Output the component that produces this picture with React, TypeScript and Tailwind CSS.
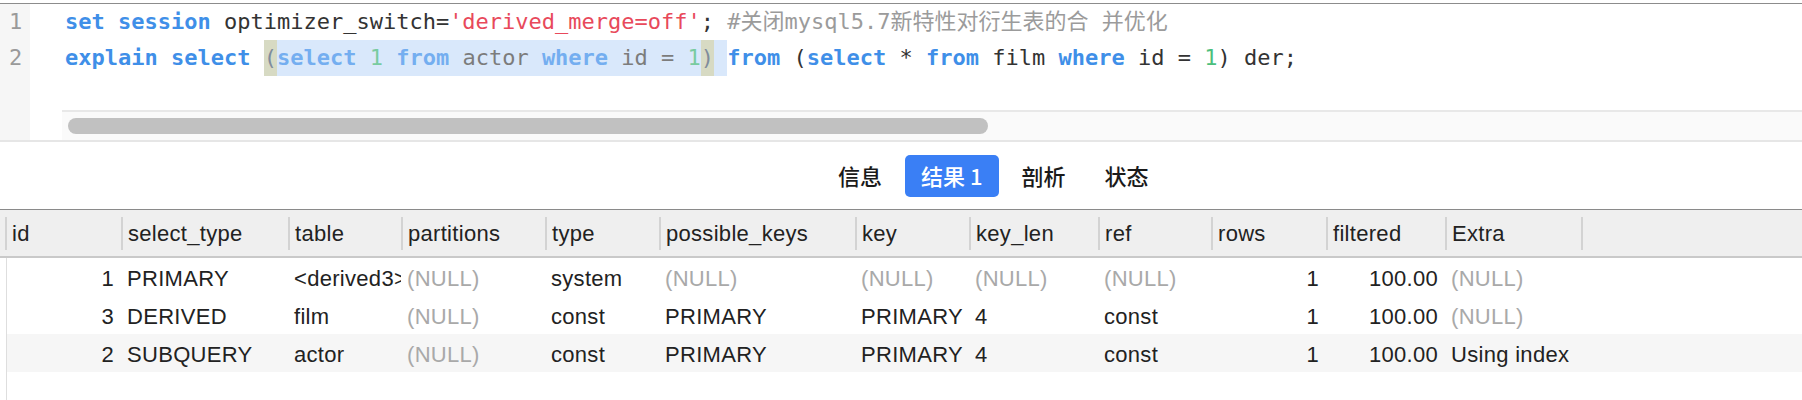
import React from 'react';

const MONO = { fontFamily: '"DejaVu Sans Mono", "Noto Sans CJK SC", monospace' };

type Tok = { t: string; c: string };

const KW = 'text-[#3f8fe8] font-bold';
const KW_SEL = 'text-[#74aef0] font-bold';
const TXT = 'text-[#333333]';
const TXT_SEL = 'text-[#7c7c7c]';
const NUM = 'text-[#4cbf7c]';
const NUM_SEL = 'text-[#78cba0]';

const line1: Tok[] = [
  { t: 'set session ', c: KW },
  { t: 'optimizer_switch=', c: TXT },
  { t: "'derived_merge=off'", c: 'text-[#e8495b]' },
  { t: ';', c: TXT },
  { t: ' #关闭mysql5.7新特性对衍生表的合 并优化', c: 'text-[#9b9b9b]' },
];

// selection inside line 2 (bracket match + selected text)
const line2Sel: Tok[] = [
  { t: '(', c: 'text-[#7f8c9c] bg-[#d7dac3]' },
  { t: 'select', c: KW_SEL + ' bg-[#d9e8fb]' },
  { t: ' ', c: 'bg-[#d9e8fb]' },
  { t: '1', c: NUM_SEL + ' bg-[#d9e8fb]' },
  { t: ' ', c: 'bg-[#d9e8fb]' },
  { t: 'from', c: KW_SEL + ' bg-[#d9e8fb]' },
  { t: ' actor ', c: TXT_SEL + ' bg-[#d9e8fb]' },
  { t: 'where', c: KW_SEL + ' bg-[#d9e8fb]' },
  { t: ' id = ', c: TXT_SEL + ' bg-[#d9e8fb]' },
  { t: '1', c: NUM_SEL + ' bg-[#d9e8fb]' },
  { t: ')', c: 'text-[#7f8c9c] bg-[#d7dac3]' },
  { t: ' ', c: 'bg-[#d9e8fb]' },
];

const line2Rest: Tok[] = [
  { t: 'from', c: KW },
  { t: ' (', c: TXT },
  { t: 'select', c: KW },
  { t: ' * ', c: TXT },
  { t: 'from', c: KW },
  { t: ' film ', c: TXT },
  { t: 'where', c: KW },
  { t: ' id = ', c: TXT },
  { t: '1', c: NUM },
  { t: ') der;', c: TXT },
];

const COLS = [
  { name: 'id', w: 116, align: 'right' },
  { name: 'select_type', w: 167 },
  { name: 'table', w: 113 },
  { name: 'partitions', w: 144 },
  { name: 'type', w: 114 },
  { name: 'possible_keys', w: 196 },
  { name: 'key', w: 114 },
  { name: 'key_len', w: 129 },
  { name: 'ref', w: 113 },
  { name: 'rows', w: 115, align: 'right' },
  { name: 'filtered', w: 119, align: 'right' },
  { name: 'Extra', w: 136 },
];

const ROWS = [
  ['1', 'PRIMARY', '<derived3>', '(NULL)', 'system', '(NULL)', '(NULL)', '(NULL)', '(NULL)', '1', '100.00', '(NULL)'],
  ['3', 'DERIVED', 'film', '(NULL)', 'const', 'PRIMARY', 'PRIMARY', '4', 'const', '1', '100.00', '(NULL)'],
  ['2', 'SUBQUERY', 'actor', '(NULL)', 'const', 'PRIMARY', 'PRIMARY', '4', 'const', '1', '100.00', 'Using index'],
];

function Toks({ toks, block }: { toks: Tok[]; block?: boolean }) {
  return (
    <>
      {toks.map((k, i) => (
        <span key={i} className={`${k.c} ${block ? 'inline-block h-[36px]' : ''}`}>
          {k.t}
        </span>
      ))}
    </>
  );
}

function Editor() {
  return (
    <div className="flex border-b-2 border-[#e6e6e6]" style={MONO}>
      <div className="w-[30px] shrink-0 bg-[#f6f6f6] text-[22px] leading-[36px] text-[#9a9a9a]">
        <div className="pl-[9px]">1</div>
        <div className="pl-[9px]">2</div>
      </div>
      <div className="flex-1 min-w-0">
        <div className="pl-[35px] text-[22px] leading-[36px] whitespace-pre">
          <div className="h-[36px]">
            <Toks toks={line1} />
          </div>
          <div className="h-[36px] flex">
            <span className="inline-block h-[36px] text-[#3f8fe8] font-bold">explain select </span>
            <Toks toks={line2Sel} block />
            <span className="inline-block h-[36px]">
              <Toks toks={line2Rest} />
            </span>
          </div>
        </div>
        <div className="h-[34px]" />
        <div className="ml-[32px] h-[30px] border-t-2 border-[#e8e8e8] bg-[#fafafa] pt-[6px] pl-[6px]">
          <div className="w-[920px] h-[16px] rounded-full bg-[#c1c1c1]" />
        </div>
      </div>
    </div>
  );
}

function Tabs() {
  const tabs = ['信息', '结果 1', '剖析', '状态'];
  return (
    <div
      className="h-[67px] flex items-center pl-[822px] gap-[7px] text-[22px] font-medium text-[#1a1a1a]"
      style={{ fontFamily: '"Noto Sans CJK SC", "Liberation Sans", sans-serif' }}
    >
      {tabs.map((t, i) => (
        <div
          key={t}
          className={`h-[42px] px-4 flex items-center rounded-[5px] ${i === 1 ? 'bg-[#3a7ff5] text-white' : ''}`}
        >
          {t}
        </div>
      ))}
    </div>
  );
}

function ResultGrid() {
  return (
    <div
      className="text-[22px] tracking-[0.3px] text-[#222222]"
      style={{ fontFamily: '"Liberation Sans", Arial, sans-serif' }}
    >
      <div className="h-[49px] flex items-center pl-[5px] bg-[#efefef] border-t border-[#8a8a8a] border-b-2 border-b-[#c9c9c9]">
        {COLS.map(c => (
          <div key={c.name} className="flex items-center shrink-0" style={{ width: c.w }}>
            <div className="w-[2px] h-[33px] bg-[#d3d3d3]" />
            <div className="pl-[5px] whitespace-nowrap">{c.name}</div>
          </div>
        ))}
        <div className="w-[2px] h-[33px] bg-[#d3d3d3]" />
      </div>
      <div className="flex h-[142px]">
        <div className="w-[6px] shrink-0" />
        <div className="w-px shrink-0 bg-[#dedede]" />
        <div className="flex-1">
          {ROWS.map((r, ri) => (
            <div key={ri} className={`h-[38px] flex items-center ${ri === 2 ? 'bg-[#f6f6f6]' : ''}`}>
              {r.map((v, ci) => {
                const col = COLS[ci];
                const w = ci === 0 ? col.w - 2 : col.w;
                const right = col.align === 'right';
                return (
                  <div
                    key={ci}
                    className={`shrink-0 overflow-hidden whitespace-nowrap pt-[3px] ${right ? 'text-right pr-[7px]' : 'pl-[6px]'} ${v === '(NULL)' ? 'text-[#a9a9a9]' : ''}`}
                    style={{ width: w }}
                  >
                    {v}
                  </div>
                );
              })}
            </div>
          ))}
        </div>
      </div>
    </div>
  );
}

export default function App() {
  return (
    <div className="w-[1802px] h-[400px] bg-white overflow-hidden">
      <div className="h-[3px]" />
      <div className="border-t border-[#8c8c8c]">
        <Editor />
      </div>
      <Tabs />
      <ResultGrid />
    </div>
  );
}
